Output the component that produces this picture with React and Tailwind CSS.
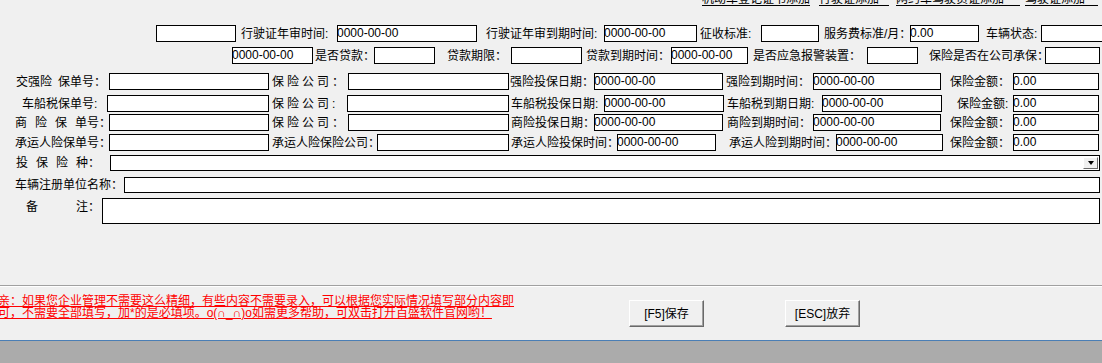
import React from "react";

const Label = ({ className = "", children }) => (
  <div
    className={`flex h-full shrink-0 items-center whitespace-nowrap text-[12px] leading-[12px] text-black ${className}`}
  >
    {children}
  </div>
);

const Box = ({ className = "", value }) => (
  <div
    className={`flex h-full shrink-0 items-start overflow-hidden border border-black bg-white text-[12px] leading-[14px] text-black ${className}`}
  >
    {value && <span className="-ml-[1px] whitespace-nowrap">{value}</span>}
  </div>
);

const Row = ({ className = "", children }) => (
  <div className={`flex shrink-0 overflow-hidden ${className}`}>{children}</div>
);

const Btn = ({ className = "", children }) => (
  <button
    type="button"
    className={`flex h-[27px] w-[75px] shrink-0 items-center justify-center border border-t-white border-l-white border-r-[#696969] border-b-[#696969] bg-[#f0f0f0] text-[12px] leading-[12px] text-black shadow-[inset_-1px_-1px_0_#a0a0a0] ${className}`}
  >
    {children}
  </button>
);

const DATE = "0000-00-00";

const App = () => {
  return (
    <div className="flex h-[363px] w-full flex-col overflow-hidden bg-[#f0f0f0] font-['Liberation_Sans','Noto_Sans_CJK_SC',sans-serif]">
      <div className="flex h-[285px] shrink-0 flex-col">
        {/* links cut off at the top edge */}
        <div className="flex h-[6px] shrink-0 items-end overflow-hidden text-[12px] leading-[12px] text-black">
          <a href="#" className="ml-[702px] block w-[108px] shrink-0 whitespace-nowrap border-b border-black">
            机动车登记证书添加
          </a>
          <a href="#" className="ml-[9px] block w-[70px] shrink-0 whitespace-nowrap border-b border-black">
            行驶证添加
          </a>
          <a href="#" className="ml-[7px] block w-[124px] shrink-0 whitespace-nowrap border-b border-black">
            网约车驾驶员证添加
          </a>
          <a href="#" className="ml-[5px] block w-[73px] shrink-0 whitespace-nowrap border-b border-black">
            驾驶证添加
          </a>
        </div>

        <Row className="mt-[19px] h-[17px]">
          <Box className="ml-[156px] w-[80px]" />
          <Label className="ml-[5px] w-[96px]">行驶证年审时间:</Label>
          <Box className="w-[140px]" value={DATE} />
          <Label className="ml-[9px] w-[118px]">行驶证年审到期时间:</Label>
          <Box className="w-[93px]" value={DATE} />
          <Label className="ml-[3px] w-[61px]">征收标准:</Label>
          <Box className="w-[58px]" />
          <Label className="ml-[5px] w-[86px]">服务费标准/月：</Label>
          <Box className="w-[69px]" value="0.00" />
          <Label className="ml-[7px] w-[55px]">车辆状态:</Label>
          <Box className="w-[70px]" />
        </Row>

        <Row className="mt-[5px] h-[17px]">
          <Box className="ml-[232px] w-[81px]" value={DATE} />
          <Label className="ml-[2px] w-[59px]">是否贷款：</Label>
          <Box className="w-[61px]" />
          <Label className="ml-[12px] w-[64px]">贷款期限：</Label>
          <Box className="w-[71px]" />
          <Label className="ml-[4px] w-[85px]">贷款到期时间：</Label>
          <Box className="w-[77px]" value={DATE} />
          <Label className="ml-[5px] w-[114px]">是否应急报警装置：</Label>
          <Box className="w-[51px]" />
          <Label className="ml-[11px] w-[116px]">保险是否在公司承保：</Label>
          <Box className="w-[55px]" />
        </Row>

        <Row className="mt-[9px] h-[17px]">
          <Label className="ml-[16px] w-[93px]">
            交强险<span className="ml-[6px]">保单号：</span>
          </Label>
          <Box className="w-[160px]" />
          <Label className="ml-[3px] w-[76px]">
            <span className="tracking-[3px]">保险公司</span>：
          </Label>
          <Box className="w-[161px]" />
          <Label className="ml-[1px] w-[84px]">强险投保日期：</Label>
          <Box className="w-[129px]" value={DATE} />
          <Label className="ml-[3px] w-[87px]">强险到期时间：</Label>
          <Box className="w-[128px]" value={DATE} />
          <Label className="ml-[9px] w-[63px]">保险金额：</Label>
          <Box className="w-[86px]" value="0.00" />
        </Row>

        <Row className="mt-[5px] h-[17px]">
          <Label className="ml-[22px] w-[85px]">车船税保单号:</Label>
          <Box className="w-[162px]" />
          <Label className="ml-[3px] w-[75px]">
            <span className="tracking-[3px]">保险公司</span>:
          </Label>
          <Box className="w-[162px]" />
          <Label className="ml-[2px] w-[93px]">车船税投保日期:</Label>
          <Box className="w-[120px]" value={DATE} />
          <Label className="ml-[3px] w-[95px]">车船税到期日期:</Label>
          <Box className="w-[120px]" value={DATE} />
          <Label className="ml-[15px] w-[56px]">保险金额:</Label>
          <Box className="w-[86px]" value="0.00" />
        </Row>

        <Row className="mt-[2px] h-[17px]">
          <Label className="ml-[15px] w-[94px]">
            <span className="tracking-[8px]">商险保</span>单号：
          </Label>
          <Box className="w-[160px]" />
          <Label className="ml-[3px] w-[76px]">
            <span className="tracking-[3px]">保险公司</span>：
          </Label>
          <Box className="w-[161px]" />
          <Label className="ml-[2px] w-[83px]">商险投保日期：</Label>
          <Box className="w-[129px]" value={DATE} />
          <Label className="ml-[4px] w-[86px]">商险到期时间：</Label>
          <Box className="w-[128px]" value={DATE} />
          <Label className="ml-[9px] w-[63px]">保险金额：</Label>
          <Box className="w-[86px]" value="0.00" />
        </Row>

        <Row className="mt-[3px] h-[17px]">
          <Label className="ml-[15px] w-[94px]">承运人险保单号：</Label>
          <Box className="w-[160px]" />
          <Label className="ml-[3px] w-[105px]">承运人险保险公司：</Label>
          <Box className="w-[132px]" />
          <Label className="ml-[2px] w-[106px]">承运人险投保时间：</Label>
          <Box className="w-[99px]" value={DATE} />
          <Label className="ml-[13px] w-[107px]">承运人险到期时间：</Label>
          <Box className="w-[107px]" value={DATE} />
          <Label className="ml-[7px] w-[63px]">保险金额：</Label>
          <Box className="w-[86px]" value="0.00" />
        </Row>

        <Row className="mt-[4px] h-[16px]">
          <Label className="ml-[16px] w-[94px]">
            <span className="tracking-[8px]">投保险</span>种：
          </Label>
          <div className="flex h-full w-[990px] shrink-0 items-center justify-end border border-black bg-white pr-[1px]">
            <div className="flex h-[12px] w-[15px] items-center justify-center border border-t-white border-l-white border-r-[#696969] border-b-[#696969] bg-[#f0f0f0]">
              <div className="h-0 w-0 border-x-[3.5px] border-t-[4px] border-x-transparent border-t-black" />
            </div>
          </div>
        </Row>

        <Row className="mt-[6px] h-[16px]">
          <Label className="ml-[15px] w-[109px]">车辆注册单位名称：</Label>
          <Box className="w-[976px]" />
        </Row>

        <Row className="mt-[5px] h-[26px]">
          <Label className="ml-[26px] w-[76px] items-start pt-[3px]">
            备<span className="ml-[38px]">注：</span>
          </Label>
          <Box className="w-[998px]" />
        </Row>
      </div>

      <div className="flex h-[55px] shrink-0 border-t border-[#a0a0a0] shadow-[inset_0_1px_0_#ffffff]">
        <div className="-ml-[2px] mt-[9px] w-[519px] shrink-0 whitespace-nowrap text-[12px] leading-[12px] text-[#ff0000] underline">
          亲：如果您企业管理不需要这么精细，有些内容不需要录入，可以根据您实际情况填写部分内容即
          <br />
          可，不需要全部填写，加*的是必填项。o(∩_∩)o如需更多帮助，可双击打开百盛软件官网哟！
        </div>
        <Btn className="ml-[112px] mt-[14px]">[F5]保存</Btn>
        <Btn className="ml-[81px] mt-[14px]">[ESC]放弃</Btn>
      </div>

      <div className="h-[1px] shrink-0 bg-[#4a7eb5]" />
      <div className="flex-1 bg-[#ababab]" />
    </div>
  );
};

export default App;
